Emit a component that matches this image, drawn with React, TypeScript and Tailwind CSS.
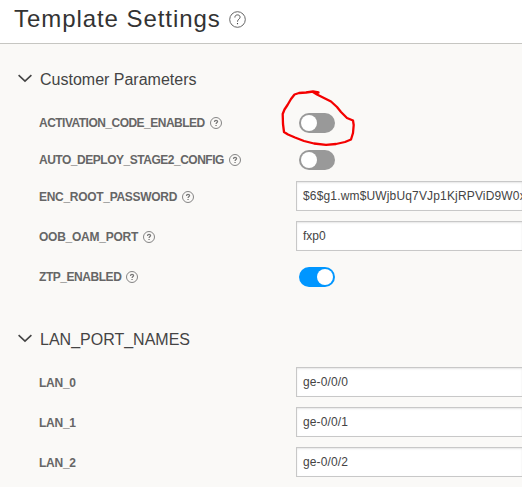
type Row = {
  name: string;
  height: string;
  label: string;
  value?: string;
  valueTracking?: string;
  on?: boolean;
  help?: boolean;
};

const customerRows: Row[] = [
  { name: "ACTIVATION_CODE_ENABLED", height: "h-[38px]", label: "tracking-[-0.52px]", on: false, help: true },
  { name: "AUTO_DEPLOY_STAGE2_CONFIG", height: "h-9", label: "tracking-[-0.48px]", on: false, help: true },
  { name: "ENC_ROOT_PASSWORD", height: "h-9", label: "pt-px tracking-[-0.3px]", value: "$6$g1.wm$UWjbUq7VJp1KjRPViD9W0x", valueTracking: "tracking-[0.16px]", help: true },
  { name: "OOB_OAM_PORT", height: "h-11", label: "pt-px tracking-[-0.25px]", value: "fxp0", help: true },
  { name: "ZTP_ENABLED", height: "h-[38px]", label: "tracking-[-0.45px]", on: true, help: true },
];

const lanRows: Row[] = [
  { name: "LAN_0", height: "h-10", label: "pt-0.5 tracking-[-0.25px]", value: "ge-0/0/0", valueTracking: "tracking-[0.12px]" },
  { name: "LAN_1", height: "h-10", label: "pt-0.5 tracking-[-0.25px]", value: "ge-0/0/1", valueTracking: "tracking-[0.12px]" },
  { name: "LAN_2", height: "h-10", label: "pt-0.5 tracking-[-0.25px]", value: "ge-0/0/2", valueTracking: "tracking-[0.12px]" },
];

function Help({ large = false }: { large?: boolean }) {
  return large ? (
    <svg className="h-[17px] w-[17px] shrink-0" viewBox="0 0 17 17" fill="none" stroke="#555" strokeWidth="0.9">
      <circle cx="8.5" cy="8.5" r="7.8" />
      <path d="M5.900 6.500C5.900 4.700 7 3.900 8.500 3.900S11.100 4.800 11.100 6.200C11.100 8 8.500 8.200 8.500 10.700" strokeWidth="1" />
      <path d="M7.950 12h1.100v1.200H7.950z" fill="#444" stroke="none" />
    </svg>
  ) : (
    <svg className="h-3 w-3 shrink-0" viewBox="0 0 12 12" fill="none" stroke="#777">
      <circle cx="6" cy="6" r="5.5" strokeWidth="0.9" />
      <path d="M4.500 4.900C4.500 3.800 5.100 3.300 6 3.300s1.600.5 1.600 1.300C7.600 5.500 6.100 5.700 6.100 7" strokeWidth="1.25" />
      <path d="M5.400 7.900h1.300v1.200H5.400z" fill="#777" stroke="none" />
    </svg>
  );
}

function Toggle({ on }: { on: boolean }) {
  return (
    <div className={`ml-[3px] flex h-5 w-9 items-center rounded-full px-0.5 ${on ? "justify-end bg-[#0096ff]" : "bg-[#999]"}`}>
      <div className="h-4 w-4 rounded-full bg-white" />
    </div>
  );
}

function SettingRow({ row }: { row: Row }) {
  return (
    <div className={`flex items-center ${row.height}`}>
      <div className={`flex w-[257px] shrink-0 items-center gap-[5px] ${row.label}`}>
        <span className="text-[12px] leading-4 font-bold whitespace-nowrap text-[#666]">{row.name}</span>
        {row.help && <Help />}
      </div>
      {row.value !== undefined ? (
        <div className={`flex h-[30px] flex-1 items-center overflow-hidden border border-r-0 border-[#c8c8c8] bg-white pl-1.5 text-[12px] whitespace-nowrap text-[#444] shadow-[inset_0_1px_2px_rgba(0,0,0,0.1)] ${row.valueTracking ?? ""}`}>
          {row.value}
        </div>
      ) : (
        <Toggle on={!!row.on} />
      )}
    </div>
  );
}

function Heading({ title }: { title: string }) {
  return (
    <h2 className="flex items-start gap-2 pl-[18px] text-[16px] leading-5 text-[#444]">
      <svg className="mt-[5px] h-2.5 w-3.5 shrink-0" viewBox="0 0 14 10" fill="none" stroke="#444" strokeWidth="1.6">
        <path d="M.6 1.200 7 7.200l6.400-6" />
      </svg>
      <span className="pt-px">{title}</span>
    </h2>
  );
}

export default function App() {
  return (
    <main className="relative h-[487px] w-[522px] overflow-hidden bg-[#faf9f7] font-['Liberation_Sans',Arial,sans-serif]">
      <header className="flex h-11 items-center gap-2 border-b border-[#c6c6c2] bg-white pb-1 pl-3.5">
        <h1 className="pb-0.5 text-[24px] leading-7 tracking-[0.94px] text-[#333]">Template Settings</h1>
        <Help large />
      </header>
      <section className="pt-[25px]">
        <Heading title="Customer Parameters" />
        <div className="pt-[14px] pl-[39px]">
          {customerRows.map((row) => <SettingRow key={row.name} row={row} />)}
        </div>
      </section>
      <section className="pt-[33px]">
        <Heading title="LAN_PORT_NAMES" />
        <div className="pt-[12px] pl-[39px]">
          {lanRows.map((row) => <SettingRow key={row.name} row={row} />)}
        </div>
      </section>
      {/* Hand-drawn marker around the activation switch */}
      <svg className="pointer-events-none absolute top-[86px] left-[278px] h-[64px] w-[82px]" viewBox="278 86 82 64" fill="none" stroke="#f40000" strokeWidth="2.3" strokeLinecap="round" strokeLinejoin="round">
        <path d="M318.500 92.500 313 91.500 306 92.500 299 93 294.500 94.500 291 99 287.500 105 284.500 109.500 282.700 114 283 124 284 132 288 134.500 295 137.500 304 141 314 143.500 326 144.800 336 144 345 142 351 139.500 353 133 353.700 125 353 120.500 347 118 341 112 337 107 331 101.500 324 98 317 94.500 313 92" />
      </svg>
    </main>
  );
}
